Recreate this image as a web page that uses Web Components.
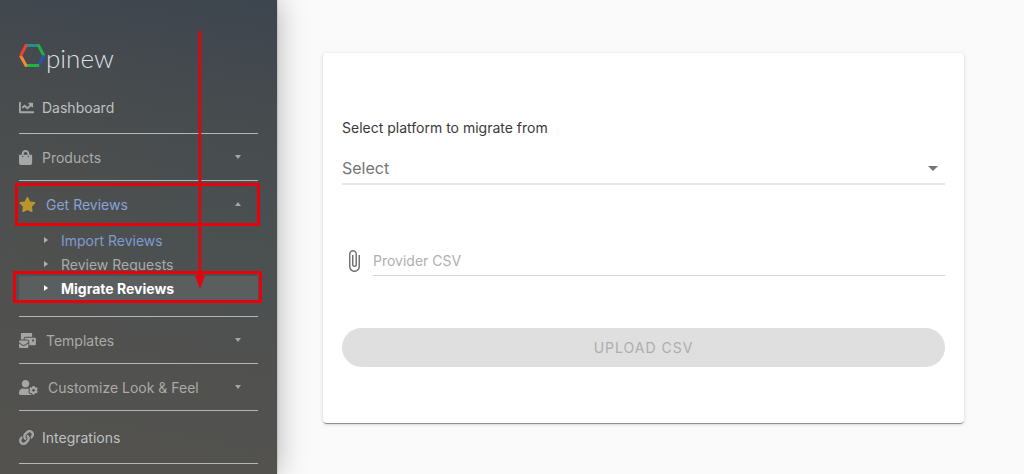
<!DOCTYPE html>
<html lang="en">
<head>
<meta charset="utf-8">
<meta name="viewport" content="width=device-width, initial-scale=1">
<title>Opinew - Migrate Reviews</title>
<style>
  html, body { margin: 0; min-height: 100%; }
  body { background: #fafafa; font-family: Inter, "Open Sans", sans-serif; font-size: 14px; overflow: hidden; }
</style>
</head>
<body>
<opinew-app>
  <side-bar slot="sidebar">
    <brand-logo slot="brand"></brand-logo>
    <nav-item icon="chart" tall>Dashboard</nav-item>
    <nav-item icon="bag" group>Products</nav-item>
    <nav-item icon="star" group open marked>Get Reviews
      <sub-item slot="children" tone="blue">Import Reviews</sub-item>
      <sub-item slot="children">Review Requests</sub-item>
      <sub-item slot="children" current marked>Migrate Reviews</sub-item>
    </nav-item>
    <nav-item icon="mail" group>Templates</nav-item>
    <nav-item icon="user" group>Customize Look &amp; Feel</nav-item>
    <nav-item icon="link" tall>Integrations</nav-item>
    <guide-arrow slot="guide"></guide-arrow>
  </side-bar>
  <migrate-card></migrate-card>
</opinew-app>
<script>
const ICONS = {
  chart: [512, 'M496 384H64V80c0-8.84-7.16-16-16-16H16C7.16 64 0 71.16 0 80v336c0 17.67 14.33 32 32 32h464c8.84 0 16-7.16 16-16v-32c0-8.84-7.16-16-16-16zM464 96H345.94c-21.38 0-32.09 25.85-16.97 40.97l32.4 32.4L288 242.75l-73.37-73.37c-12.5-12.5-32.76-12.5-45.25 0l-68.69 68.69c-6.25 6.25-6.25 16.38 0 22.63l22.62 22.62c6.25 6.25 16.38 6.25 22.63 0L192 237.25l73.37 73.37c12.5 12.5 32.76 12.5 45.25 0l96-96 32.4 32.4c15.12 15.12 40.97 4.41 40.97-16.97V112c.01-8.84-7.15-16-15.99-16z'],
  bag: [448, 'M352 160v-32C352 57.42 294.579 0 224 0 153.42 0 96 57.42 96 128v32H0v272c0 44.183 35.817 80 80 80h288c44.183 0 80-35.817 80-80V160h-96zm-192-32c0-35.29 28.71-64 64-64s64 28.71 64 64v32H160v-32zm160 120c-13.255 0-24-10.745-24-24s10.745-24 24-24 24 10.745 24 24-10.745 24-24 24zm-192 0c-13.255 0-24-10.745-24-24s10.745-24 24-24 24 10.745 24 24-10.745 24-24 24z'],
  star: [576, 'M259.3 17.8L194 150.2 47.9 171.5c-26.2 3.8-36.7 36.1-17.7 54.6l105.7 103-25 145.5c-4.5 26.3 23.2 46 46.4 33.7L288 439.6l130.7 68.7c23.2 12.2 50.9-7.4 46.4-33.7l-25-145.5 105.7-103c19-18.5 8.5-50.8-17.7-54.6L382 150.2 316.7 17.8c-11.7-23.6-45.6-23.9-57.4 0z'],
  mail: [576, 'M160 448c-25.6 0-51.2-22.4-64-32-64-44.8-83.2-60.8-96-70.4V480c0 17.67 14.33 32 32 32h256c17.67 0 32-14.33 32-32V345.6c-12.8 9.6-32 25.6-96 70.4-12.8 9.6-38.4 32-64 32zm128-192H32c-17.67 0-32 14.33-32 32v16c25.6 19.2 22.4 19.2 115.2 86.4 9.6 6.4 28.8 25.6 44.8 25.6s35.2-19.2 44.8-22.4c92.8-67.2 89.6-67.2 115.2-86.4V288c0-17.67-14.33-32-32-32zm256-96H224c-17.67 0-32 14.33-32 32v32h96c33.21 0 60.59 25.42 63.71 57.82l.29-.22V416h192c17.67 0 32-14.33 32-32V192c0-17.67-14.33-32-32-32zm-32 128h-64v-64h64v64zm-352-96c0-35.29 28.71-64 64-64h224V32c0-17.67-14.33-32-32-32H96C78.33 0 64 14.33 64 32v192h96v-32z'],
  user: [640, 'M610.5 373.3c2.6-14.1 2.6-28.5 0-42.6l25.8-14.9c3-1.7 4.3-5.2 3.3-8.5-6.7-21.6-18.2-41.2-33.2-57.4-2.3-2.5-6-3.1-9-1.4l-25.8 14.9c-10.9-9.3-23.4-16.5-36.9-21.3v-29.8c0-3.4-2.4-6.4-5.7-7.1-22.3-5-45-4.8-66.2 0-3.3.7-5.7 3.7-5.7 7.1v29.8c-13.5 4.8-26 12-36.9 21.3l-25.8-14.9c-2.9-1.7-6.7-1.1-9 1.4-15 16.2-26.5 35.8-33.2 57.4-1 3.3.4 6.8 3.3 8.5l25.8 14.9c-2.6 14.1-2.6 28.5 0 42.6l-25.8 14.9c-3 1.7-4.3 5.2-3.3 8.5 6.7 21.6 18.2 41.1 33.2 57.4 2.3 2.5 6 3.1 9 1.4l25.8-14.9c10.9 9.3 23.4 16.5 36.9 21.3v29.8c0 3.4 2.4 6.4 5.7 7.1 22.3 5 45 4.8 66.2 0 3.3-.7 5.7-3.7 5.7-7.1v-29.8c13.5-4.8 26-12 36.9-21.3l25.8 14.9c2.9 1.7 6.7 1.1 9-1.4 15-16.2 26.5-35.8 33.2-57.4 1-3.3-.4-6.8-3.3-8.5l-25.8-14.9zM496 400.5c-26.8 0-48.5-21.8-48.5-48.5s21.8-48.5 48.5-48.5 48.5 21.8 48.5 48.5-21.7 48.5-48.5 48.5zM224 256c70.7 0 128-57.3 128-128S294.7 0 224 0 96 57.3 96 128s57.3 128 128 128zm201.2 226.5c-2.3-1.2-4.6-2.6-6.8-3.9l-7.9 4.6c-6 3.4-12.8 5.3-19.6 5.3-10.9 0-21.4-4.6-28.9-12.6-18.3-19.8-32.3-43.9-40.2-69.6-5.5-17.7 1.9-36.4 17.9-45.7l7.9-4.6c-.1-2.6-.1-5.2 0-7.8l-7.9-4.6c-16-9.2-23.4-28-17.9-45.7.9-2.9 2.2-5.8 3.2-8.7-3.8-.3-7.5-1.2-11.4-1.2h-16.7c-22.2 10.2-46.9 16-72.9 16s-50.6-5.8-72.9-16h-16.7C60.2 288 0 348.2 0 422.4V464c0 26.5 21.5 48 48 48h352c10.1 0 19.5-3.2 27.2-8.5-1.2-3.8-2-7.7-2-11.8v-9.2z'],
  link: [512, 'M326.612 185.391c59.747 59.809 58.927 155.698.36 214.59-.11.12-.24.25-.36.37l-67.2 67.2c-59.27 59.27-155.699 59.262-214.96 0-59.27-59.26-59.27-155.7 0-214.96l37.106-37.106c9.84-9.84 26.786-3.3 27.294 10.606.648 17.722 3.826 35.527 9.69 52.721 1.986 5.822.567 12.262-3.783 16.612l-13.087 13.087c-28.026 28.026-28.905 73.66-1.155 101.96 28.024 28.579 74.086 28.749 102.325.51l67.2-67.19c28.191-28.191 28.073-73.757 0-101.83-3.701-3.694-7.429-6.564-10.341-8.569a16.037 16.037 0 0 1-6.947-12.606c-.396-10.567 3.348-21.456 11.698-29.806l21.054-21.055c5.521-5.521 14.182-6.199 20.584-1.731a152.482 152.482 0 0 1 20.522 17.197zM467.547 44.449c-59.261-59.262-155.69-59.27-214.96 0l-67.2 67.2c-.12.12-.25.25-.36.37-58.566 58.892-59.387 154.781.36 214.59a152.454 152.454 0 0 0 20.521 17.196c6.402 4.468 15.064 3.789 20.584-1.731l21.054-21.055c8.35-8.35 12.094-19.239 11.698-29.806a16.037 16.037 0 0 0-6.947-12.606c-2.912-2.005-6.64-4.875-10.341-8.569-28.073-28.073-28.191-73.639 0-101.83l67.2-67.19c28.239-28.239 74.3-28.069 102.325.51 27.75 28.3 26.872 73.934-1.155 101.96l-13.087 13.087c-4.35 4.35-5.769 10.79-3.783 16.612 5.864 17.194 9.042 34.999 9.69 52.721.509 13.906 17.454 20.446 27.294 10.606l37.106-37.106c59.271-59.259 59.271-155.699.001-214.959z']
};

class BaseElement extends HTMLElement {
  connectedCallback() {
    if (this.shadowRoot) return;
    this.attachShadow({ mode: 'open' }).innerHTML = this.render();
  }
}

customElements.define('opinew-app', class extends BaseElement {
  render() {
    return `<style>
      :host { display: grid; grid-template-columns: 277px minmax(0, 1fr); min-height: 100vh; }
      main { padding: 53px 60px 48px 46px; }
    </style>
    <slot name="sidebar"></slot><main><slot></slot></main>`;
  }
});

customElements.define('side-bar', class extends BaseElement {
  render() {
    return `<style>
      :host { display: block; position: relative; padding: 0 19px; box-shadow: 0 0 28px rgba(0,0,0,.3), 0 0 2px rgba(0,0,0,.3);
        background: radial-gradient(ellipse at 20% 42%, rgba(100,80,60,.14), transparent 40%),
          linear-gradient(190deg, #3d454e 0%, #464b4e 22%, #4b5051 50%, #51514f 74%, #53524f 100%); }
    </style>
    <slot name="brand"></slot><nav aria-label="Main"><slot></slot></nav><slot name="guide"></slot>`;
  }
});

customElements.define('brand-logo', class extends BaseElement {
  render() {
    return `<style>
      :host { display: block; height: 38px; padding-top: 43px; }
      a { display: flex; align-items: flex-start; color: #dcdfe0; text-decoration: none; }
      svg { flex: none; }
      span { font: 300 26px/30px Lato, sans-serif; }
    </style>
    <a href="#home" aria-label="Opinew"><svg width="27" height="26" viewBox="0 0 27 26" fill="none" stroke-width="3">
      <path d="M6.500 2.500H19.500" stroke="#238f93"/>
      <path d="M19 1.500L25 13" stroke="#20b046"/>
      <path d="M25 12.500L19 23.500" stroke="#2955ad"/>
      <path d="M20 22.500H7" stroke="#23b344"/>
      <path d="M7.500 23.500L1.500 12.500" stroke="#f28a2e"/>
      <path d="M1.500 13L7.500 1.500" stroke="#ee4035"/>
    </svg><span>pinew</span></a>`;
  }
});

customElements.define('nav-item', class extends BaseElement {
  render() {
    const [w, d] = ICONS[this.getAttribute('icon')];
    const group = this.hasAttribute('group');
    const open = this.hasAttribute('open');
    const tag = group ? 'button' : 'a';
    const attrs = group ? `type="button" aria-expanded="${open}"` : 'href="#page"';
    const boxes = { 576: 19, 640: 21 };
    const caret = group ? `<svg class="caret" width="6" height="4" viewBox="0 0 6 4"><path d="${open ? 'M0 4L3 0L6 4Z' : 'M0 0L3 4L6 0Z'}"/></svg>` : '';
    return `<style>
      :host { display: block; border-bottom: 1px solid #b5b6b6; color: #a9abab; }
      :host([tall]) { color: #bfc1c1; }
      .row { position: relative; display: flex; align-items: center; gap: 8px; box-sizing: border-box; width: 100%; height: 46px;
        margin: 0; border: 0; padding: 0 17px 0 0; background: none; color: inherit; font: inherit; text-align: left; text-decoration: none; }
      :host([tall]) .row { height: 52px; }
      :host([open]) .row { color: #86a2d8; }
      svg { flex: none; fill: #a5a7a7; }
      :host([icon=star]) .icon { fill: #b8952d; }
      .label { flex: 1; white-space: nowrap; }
      :host([marked]) .row::after { content: ""; position: absolute; inset: 2px -2px 1px -4px; border: 3px solid #e8000b; }
      .children { display: block; padding: 1px 0 16px; }
    </style>
    <${tag} class="row" ${attrs}><svg class="icon" width="${boxes[w] || 15}" height="15" viewBox="0 0 ${w} 512" preserveAspectRatio="xMinYMid"><path d="${d}"/></svg><span class="label"><slot></slot></span>${caret}</${tag}>
    ${open ? '<div class="children"><slot name="children"></slot></div>' : ''}`;
  }
});

customElements.define('sub-item', class extends BaseElement {
  render() {
    return `<style>
      :host { display: block; position: relative; color: #a9abab; }
      :host([tone=blue]) { color: #7f9bd2; }
      :host([current]) { color: #fff; background: #5b5e5f; font-weight: 700; }
      a { display: flex; align-items: center; gap: 13px; height: 24px; padding-left: 25px; color: inherit; text-decoration: none; white-space: nowrap; }
      svg { flex: none; fill: #b0b2b2; }
      :host([current]) svg { fill: #fff; }
      :host([marked])::after { content: ""; position: absolute; inset: -5px -4px -3px -6px; border: 3px solid #e8000b; }
    </style>
    <a href="#reviews"><svg width="4" height="6" viewBox="0 0 4 6"><path d="M0 0L4 3L0 6Z"/></svg><span><slot></slot></span></a>`;
  }
});

customElements.define('guide-arrow', class extends BaseElement {
  render() {
    return `<style>
      :host { display: block; position: absolute; left: 195px; top: 31px; pointer-events: none; }
      svg { display: block; }
    </style>
    <svg width="10" height="258" viewBox="0 0 10 258" fill="#e8000b"><path d="M3.500 0H6.200V244H10L5 258L0 244H3.500Z"/></svg>`;
  }
});

customElements.define('migrate-card', class extends BaseElement {
  render() {
    return `<style>
      :host { display: block; padding: 64px 19px 56px; border-radius: 4px; background: #fff;
        box-shadow: 0 2px 1px -1px rgba(0,0,0,.3), 0 1px 1px rgba(0,0,0,.16), 0 1px 4px rgba(0,0,0,.14); }
      label { display: block; line-height: 22px; color: #3a3a3a; }
      .select { position: relative; margin-top: 14px; }
      select { display: block; box-sizing: border-box; width: 100%; height: 32px; margin: 0; padding: 0; border: 0; border-bottom: 2px solid #e8e8e8;
        border-radius: 0; appearance: none; background: none; color: #757575; font: inherit; font-size: 16px; }
      .select svg { position: absolute; right: 7px; top: 13px; fill: #757575; pointer-events: none; }
      .file { display: flex; align-items: center; gap: 7px; margin-top: 60px; }
      .file svg { flex: none; fill: #757575; }
      input { flex: 1; min-width: 0; box-sizing: border-box; height: 31px; margin: 0; padding: 0; border: 0; border-bottom: 1px solid #d3d3d3;
        border-radius: 0; background: none; font: inherit; color: #3a3a3a; }
      input::placeholder { color: #b0b0b0; opacity: 1; }
      button { display: block; width: 100%; height: 39px; margin: 52px 0 0; border: 0; border-radius: 20px; background: #dfdfdf; color: #adadad;
        font: inherit; letter-spacing: 1px; text-transform: uppercase; }
    </style>
    <form>
      <label for="platform">Select platform to migrate from</label>
      <div class="select">
        <select id="platform"><option>Select</option></select>
        <svg width="10" height="5" viewBox="0 0 10 5"><path d="M0 0L5 5L10 0Z"/></svg>
      </div>
      <div class="file">
        <svg width="24" height="24" viewBox="0 0 24 24" aria-hidden="true"><path d="M16.500 6v11.500c0 2.210-1.790 4-4 4s-4-1.790-4-4V5a2.500 2.500 0 0 1 5 0v10.500c0 .55-.45 1-1 1s-1-.45-1-1V6H10v9.500a2.500 2.500 0 0 0 5 0V5c0-2.210-1.790-4-4-4S7 2.790 7 5v12.500c0 3.040 2.460 5.500 5.500 5.500s5.500-2.460 5.500-5.500V6h-1.500z"/></svg>
        <input type="text" readonly placeholder="Provider CSV" aria-label="Provider CSV">
      </div>
      <button type="button" disabled>Upload CSV</button>
    </form>`;
  }
});
</script>
</body>
</html>
